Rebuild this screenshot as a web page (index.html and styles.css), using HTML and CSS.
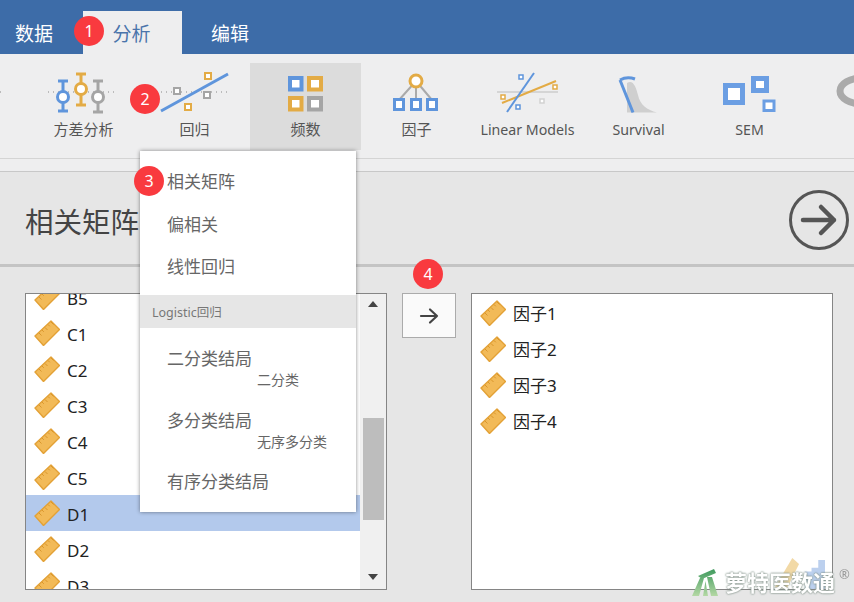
FILE: index.html
```html
<!DOCTYPE html>
<html lang="zh-CN">
<head>
    <meta charset="UTF-8">
    <meta name="viewport" content="width=device-width, initial-scale=1.0">
    <title>相关矩阵</title>
    <link rel="stylesheet" href="styles.css">
</head>
<body>

    <!-- Ruler icon used by every variable row -->
    <svg class="defs">
        <symbol id="regla" viewBox="0 0 26 26">
            <path d="M1 16 17 1 25.500 9.500 9.500 25.500Z" fill="#f2ba58" stroke="#e3a136" stroke-width="1.400" stroke-linejoin="round"/>
            <path d="M5 13 7.500 15.500M8 10 9.800 11.800M11 7.500 13.500 10M14 4.500 15.800 6.300M17 2 19.500 4.500" stroke="#d9962c" stroke-width="1"/>
        </symbol>
        <linearGradient id="verde" x1="0" y1="0" x2="0" y2="1">
            <stop offset="0" stop-color="#3f9a5e"/>
            <stop offset="1" stop-color="#b4d8a4"/>
        </linearGradient>
    </svg>

    <div class="pagina">

        <!-- Tabs -->
        <div class="pestanas">
            <div class="pestana">数据</div>
            <div class="pestana activa">分析</div>
            <div class="pestana">编辑</div>
        </div>

        <!-- Ribbon -->
        <div class="cinta">
            <div class="boton-cinta">
                <svg class="icono" viewBox="0 0 111 58">
                    <path d="M-28 29H-24M20 29H87" stroke="#888" stroke-width="1" stroke-dasharray="1 4"/>
                    <path d="M30 18H40M35 18V48M30 48H40" class="trazo azul"/>
                    <circle cx="35" cy="34" r="5.500" class="aro azul"/>
                    <path d="M48 11H58M53 11V42M48 42H58" class="trazo naranja"/>
                    <circle cx="53" cy="26" r="5.500" class="aro naranja"/>
                    <path d="M65 18H75M70 18V49M65 49H75" class="trazo gris"/>
                    <circle cx="70" cy="34" r="5.500" class="aro gris"/>
                </svg>
                <span>方差分析</span>
            </div>
            <div class="boton-cinta">
                <svg class="icono" viewBox="0 0 111 58">
                    <path d="M22 29H89" stroke="#888" stroke-width="1" stroke-dasharray="1 4"/>
                    <path d="M22 48 89 11" class="trazo azul"/>
                    <rect x="35" y="25" width="6" height="6" class="cuadro gris"/>
                    <rect x="66" y="10" width="6" height="6" class="cuadro naranja"/>
                    <rect x="65" y="29" width="6" height="6" class="cuadro gris"/>
                    <rect x="46" y="41" width="6" height="6" class="cuadro naranja"/>
                </svg>
                <span>回归</span>
            </div>
            <div class="boton-cinta marcado">
                <svg class="icono" viewBox="0 0 111 58">
                    <rect x="40" y="15" width="11.500" height="11.500" class="cuadro grueso azul"/>
                    <rect x="59" y="15" width="12" height="11.500" class="cuadro grueso naranja"/>
                    <rect x="40" y="35" width="11.500" height="11.500" class="cuadro grueso naranja"/>
                    <rect x="59" y="35" width="12" height="11.500" class="cuadro grueso gris"/>
                </svg>
                <span>频数</span>
            </div>
            <div class="boton-cinta">
                <svg class="icono" viewBox="0 0 111 58">
                    <path d="M55 18 38 37M55 18V37M55 18 71 37" fill="none" stroke="#aaa" stroke-width="2"/>
                    <circle cx="55" cy="18" r="6" class="aro naranja"/>
                    <rect x="33.500" y="36.500" width="9" height="10" class="cuadro medio azul"/>
                    <rect x="50.500" y="36.500" width="9" height="10" class="cuadro medio azul"/>
                    <rect x="66.500" y="36.500" width="9" height="10" class="cuadro medio azul"/>
                </svg>
                <span>因子</span>
            </div>
            <div class="boton-cinta">
                <svg class="icono" viewBox="0 0 111 58">
                    <path d="M25 29H86" stroke="#ccc" stroke-width="1.500"/>
                    <path d="M30 40 84 18" class="trazo naranja fino"/>
                    <path d="M35 49 62 10" class="trazo azul fino"/>
                    <rect x="47" y="12" width="4" height="4" class="cuadro fino azul"/>
                    <rect x="81" y="22" width="4" height="4" class="cuadro fino naranja"/>
                    <rect x="29" y="32" width="4" height="4" class="cuadro fino naranja"/>
                    <rect x="44" y="42" width="4" height="4" class="cuadro fino azul"/>
                    <rect x="68" y="36" width="4" height="4" class="cuadro fino palido"/>
                </svg>
                <span class="latino">Linear Models</span>
            </div>
            <div class="boton-cinta">
                <svg class="icono" viewBox="0 0 111 58">
                    <path d="M44 20C50 16 53 24 55 32 57 42 64 47 74 49.500L44 49.500Z" fill="#cfcfcf"/>
                    <path d="M37 17 50 49.500M37 17Q44 13 52 16" class="trazo azul"/>
                </svg>
                <span class="latino">Survival</span>
            </div>
            <div class="boton-cinta">
                <svg class="icono" viewBox="0 0 111 58">
                    <rect x="31.500" y="22.500" width="17" height="17" class="cuadro grueso azul claro"/>
                    <rect x="59.500" y="15.500" width="13" height="12" class="cuadro grueso azul claro"/>
                    <rect x="70" y="38" width="10" height="9.500" class="cuadro medio azul claro-fino"/>
                </svg>
                <span class="latino">SEM</span>
            </div>
            <div class="boton-cinta">
                <svg class="icono" viewBox="0 0 111 58">
                    <ellipse cx="57" cy="28" rx="22" ry="13" fill="none" stroke="#aaa" stroke-width="7"/>
                </svg>
            </div>
        </div>
        <div class="franja"></div>

        <!-- Main panel -->
        <div class="principal">
            <div class="cabecera">
                <h1>相关矩阵</h1>
                <svg class="ir" viewBox="0 0 60 60">
                    <circle cx="30" cy="30" r="28.500" fill="none" stroke="#555" stroke-width="3"/>
                    <path d="M14 30H45M32 17 45 30 32 43" fill="none" stroke="#555" stroke-width="4.500" stroke-linecap="round" stroke-linejoin="round"/>
                </svg>
            </div>
            <div class="divisor"></div>

            <div class="paneles">
                <div class="lista">
                    <div class="filas desplazada">
                        <div class="fila"><svg class="regla"><use href="#regla"/></svg>B5</div>
                        <div class="fila"><svg class="regla"><use href="#regla"/></svg>C1</div>
                        <div class="fila"><svg class="regla"><use href="#regla"/></svg>C2</div>
                        <div class="fila"><svg class="regla"><use href="#regla"/></svg>C3</div>
                        <div class="fila"><svg class="regla"><use href="#regla"/></svg>C4</div>
                        <div class="fila"><svg class="regla"><use href="#regla"/></svg>C5</div>
                        <div class="fila elegida"><svg class="regla"><use href="#regla"/></svg>D1</div>
                        <div class="fila"><svg class="regla"><use href="#regla"/></svg>D2</div>
                        <div class="fila"><svg class="regla"><use href="#regla"/></svg>D3</div>
                    </div>
                    <div class="barra">
                        <div class="flecha arriba"></div>
                        <div class="pista"><div class="pulgar"></div></div>
                        <div class="flecha abajo"></div>
                    </div>
                </div>

                <button class="mover">
                    <svg viewBox="0 0 20 20">
                        <path d="M2 10H18M11 3.500 18 10 11 16.500" fill="none" stroke="#444" stroke-width="2.200" stroke-linecap="round" stroke-linejoin="round"/>
                    </svg>
                </button>

                <div class="lista">
                    <div class="filas bajada">
                        <div class="fila"><svg class="regla"><use href="#regla"/></svg>因子1</div>
                        <div class="fila"><svg class="regla"><use href="#regla"/></svg>因子2</div>
                        <div class="fila"><svg class="regla"><use href="#regla"/></svg>因子3</div>
                        <div class="fila"><svg class="regla"><use href="#regla"/></svg>因子4</div>
                    </div>
                    <svg class="tipos" viewBox="0 0 52 32">
                        <path d="M0 30 18 0 25 6 12 32Z" fill="#f2d9a6"/>
                        <path d="M31 14H38V32H31ZM38 10H45V32H38ZM45 2H52V32H45Z" fill="#bcd0ee"/>
                    </svg>
                </div>
            </div>
        </div>

        <!-- Dropdown menu -->
        <div class="menu">
            <div class="opcion">相关矩阵</div>
            <div class="opcion">偏相关</div>
            <div class="opcion">线性回归</div>
            <div class="grupo">Logistic回归</div>
            <div class="opcion doble">二分类结局<small>二分类</small></div>
            <div class="opcion doble">多分类结局<small>无序多分类</small></div>
            <div class="opcion ultima">有序分类结局</div>
        </div>

        <!-- Step numbers -->
        <div class="paso paso1">1</div>
        <div class="paso paso2">2</div>
        <div class="paso paso3">3</div>
        <div class="paso paso4">4</div>

        <!-- Watermark -->
        <div class="marca">
            <svg viewBox="0 0 26 28">
                <path d="M6 8 22 1 24 5 10 11ZM0 28 8 10H12L7 28ZM11 28 13.500 13 16 28ZM15 9H20L26 28H19Z" fill="url(#verde)"/>
            </svg>
            <span>萝特医数通</span>
            <sup>®</sup>
        </div>
    </div>

</body>
</html>
```

FILE: styles.css
```css
* {
    box-sizing: border-box;
}
body {
    margin: 0;
    font-family: "Noto Sans", "Noto Sans CJK SC", sans-serif;
    background-color: #e6e6e6;
}
.defs {
    position: absolute;
    width: 0;
    height: 0;
}
.pagina {
    position: relative;
    width: 854px;
    height: 602px;
    overflow: hidden;
}

/* Tabs */
.pestanas {
    display: flex;
    height: 54px;
    padding-top: 11px;
    background-color: #3d6ca8;
}
.pestana {
    width: 68px;
    padding-top: 10px;
    font-size: 19px;
    line-height: 26px;
    text-align: center;
    color: white;
}
.pestana.activa {
    width: 99px;
    margin: 0 14px 0 15px;
    padding-right: 2px;
    color: #4a74ab;
    background-color: #eeeeef;
}

/* Ribbon */
.cinta {
    display: flex;
    height: 105px;
    padding: 9px 0 0 28px;
    overflow: hidden;
    background-color: #eeeeef;
    border-bottom: 1px solid #d4d4d4;
}
.boton-cinta {
    flex: 0 0 111px;
    height: 87px;
    text-align: center;
    font-size: 15px;
    line-height: 16px;
    color: #555;
}
.boton-cinta .latino {
    font-size: 14.200px;
}
.boton-cinta.marcado {
    background-color: #dcdcdc;
}
.icono {
    display: block;
    width: 111px;
    height: 58px;
    overflow: visible;
}
.trazo {
    fill: none;
    stroke-width: 3;
}
.trazo.fino {
    stroke-width: 2;
}
.aro {
    fill: white;
    stroke-width: 3;
}
.cuadro {
    fill: white;
    stroke-width: 2;
}
.cuadro.medio {
    stroke-width: 3;
}
.cuadro.grueso {
    stroke-width: 4;
}
.cuadro.fino {
    stroke-width: 1.500;
}
.azul {
    stroke: #5f95dc;
}
.azul.claro {
    stroke: #6b9ee3;
    stroke-width: 5;
}
.azul.claro-fino {
    stroke: #6b9ee3;
}
.naranja {
    stroke: #e3ab45;
}
.gris {
    stroke: #a5a5a5;
}
.palido {
    stroke: #d2d2d2;
}
.franja {
    height: 13px;
    background-color: #eeeeef;
    border-bottom: 1px solid #c8c8c8;
}

/* Main panel */
.cabecera {
    display: flex;
    justify-content: space-between;
    align-items: center;
    height: 92px;
    padding: 4px 5px 0 25px;
}
.cabecera h1 {
    margin: 0;
    font-size: 28.500px;
    font-weight: 400;
    color: #444;
}
.ir {
    width: 60px;
    height: 60px;
}
.divisor {
    height: 3px;
    background-color: #c4c4c4;
}
.paneles {
    display: flex;
    gap: 15px;
    padding: 26px 0 0 25px;
}
.lista {
    position: relative;
    display: flex;
    width: 362px;
    height: 297px;
    overflow: hidden;
    background-color: white;
    border: 1px solid #858585;
}
.filas {
    flex: 1;
}
.fila {
    display: flex;
    align-items: center;
    gap: 7px;
    height: 36px;
    padding-left: 8px;
    font-size: 17px;
    color: #222;
}
.fila.elegida {
    background-color: #b3c9ec;
}
.regla {
    width: 26px;
    height: 26px;
    flex-shrink: 0;
}

/* Latin names sit high and Chinese ones low, so the text moves and the ruler stays */
.filas.desplazada {
    margin-top: -15px;
}
.desplazada .fila {
    padding-top: 2px;
}
.desplazada .regla {
    margin-top: -2px;
}
.filas.bajada {
    padding-top: 1px;
}
.bajada .fila {
    padding-bottom: 2px;
}
.bajada .regla {
    margin-bottom: -2px;
}
.barra {
    display: flex;
    flex-direction: column;
    flex: 0 0 26px;
    align-items: center;
    background-color: #f0f0f0;
}
.flecha {
    flex-shrink: 0;
    width: 0;
    height: 0;
    border-left: 5px solid transparent;
    border-right: 5px solid transparent;
}
.flecha.arriba {
    margin: 7px 0;
    border-bottom: 6px solid #444;
}
.flecha.abajo {
    margin: 7px 0 9px;
    border-top: 6px solid #444;
}
.pista {
    flex: 1;
    width: 100%;
    padding: 104px 2px 0 3px;
}
.pulgar {
    height: 102px;
    background-color: #bdbdbd;
}
.mover {
    display: flex;
    justify-content: center;
    align-items: center;
    width: 54px;
    height: 45px;
    padding: 0;
    background-color: #fafafa;
    border: 1px solid #ababab;
}
.mover svg {
    width: 20px;
    height: 20px;
}
.tipos {
    position: absolute;
    right: 7px;
    bottom: 0;
    width: 50px;
    height: 31px;
}

/* Dropdown menu */
.menu {
    position: absolute;
    left: 140px;
    top: 151px;
    width: 216px;
    height: 361px;
    padding-top: 10px;
    background-color: white;
    box-shadow: 0 0 4px rgba(0, 0, 0, 0.45);
}
.opcion {
    height: 42.500px;
    padding-left: 27px;
    font-size: 17px;
    line-height: 42px;
    color: #666;
}
.grupo {
    height: 33px;
    margin: 6.500px 0 13px;
    padding-left: 12px;
    font-size: 12.500px;
    line-height: 35px;
    color: #777;
    background-color: #e6e6e6;
}
.opcion.doble {
    height: 62px;
    line-height: 36px;
}
.opcion.doble small {
    display: block;
    margin: -7px 0 0 90px;
    font-size: 14px;
    line-height: 20px;
}
.opcion.ultima {
    margin-top: -4px;
}

/* Step numbers */
.paso {
    position: absolute;
    width: 30px;
    height: 30px;
    border-radius: 50%;
    font-size: 16px;
    line-height: 30px;
    text-align: center;
    color: white;
    background-color: #f93a3f;
}
.paso1 {
    left: 74px;
    top: 16px;
}
.paso2 {
    left: 130px;
    top: 84px;
}
.paso3 {
    left: 134px;
    top: 166px;
}
.paso4 {
    left: 413px;
    top: 259px;
}

/* Watermark */
.marca {
    position: absolute;
    left: 692px;
    top: 566px;
    display: flex;
    align-items: flex-start;
    gap: 7px;
    width: max-content;
    filter: blur(0.4px);
}
.marca svg {
    flex-shrink: 0;
    width: 26px;
    height: 28px;
    margin-top: 2px;
}
.marca span {
    margin-top: 3px;
    font-size: 22px;
    line-height: 26px;
    font-weight: 700;
    color: white;
    text-shadow: 0 0 2px #7f8f86, 0 0 2px #7f8f86;
}
.marca sup {
    margin-left: -3px;
    font-size: 13px;
    line-height: 16px;
    color: #999;
}
```
